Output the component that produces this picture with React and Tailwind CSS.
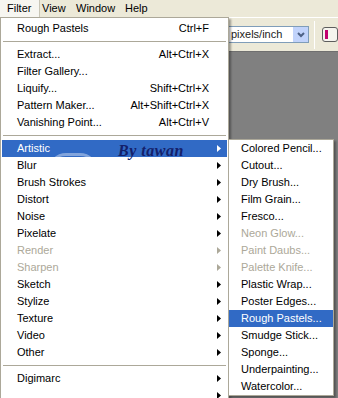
import React from 'react';

const font = { fontFamily: '"Liberation Sans", Arial, sans-serif' };

const mainItems = [
  { label: 'Rough Pastels', shortcut: 'Ctrl+F' },
  'sep',
  { label: 'Extract...', shortcut: 'Alt+Ctrl+X' },
  { label: 'Filter Gallery...' },
  { label: 'Liquify...', shortcut: 'Shift+Ctrl+X' },
  { label: 'Pattern Maker...', shortcut: 'Alt+Shift+Ctrl+X' },
  { label: 'Vanishing Point...', shortcut: 'Alt+Ctrl+V' },
  'sep',
  { label: 'Artistic', sub: true, active: true },
  { label: 'Blur', sub: true },
  { label: 'Brush Strokes', sub: true },
  { label: 'Distort', sub: true },
  { label: 'Noise', sub: true },
  { label: 'Pixelate', sub: true },
  { label: 'Render', sub: true, disabled: true },
  { label: 'Sharpen', sub: true, disabled: true },
  { label: 'Sketch', sub: true },
  { label: 'Stylize', sub: true },
  { label: 'Texture', sub: true },
  { label: 'Video', sub: true },
  { label: 'Other', sub: true },
  'sep',
  { label: 'Digimarc', sub: true },
  { label: '', sub: true },
];

const subItems = [
  { label: 'Colored Pencil...' },
  { label: 'Cutout...' },
  { label: 'Dry Brush...' },
  { label: 'Film Grain...' },
  { label: 'Fresco...' },
  { label: 'Neon Glow...', disabled: true },
  { label: 'Paint Daubs...', disabled: true },
  { label: 'Palette Knife...', disabled: true },
  { label: 'Plastic Wrap...' },
  { label: 'Poster Edges...' },
  { label: 'Rough Pastels...', active: true },
  { label: 'Smudge Stick...' },
  { label: 'Sponge...' },
  { label: 'Underpainting...' },
  { label: 'Watercolor...' },
];

const Arrow = ({ color }) => (
  <svg width="4" height="7" viewBox="0 0 4 7" className="shrink-0">
    <path d="M0 0 L4 3.5 L0 7 Z" fill={color} />
  </svg>
);

const MainRow = ({ item }) => {
  if (item === 'sep') {
    return (
      <div className="h-[9px] flex items-center px-[2px]">
        <div className="h-px w-full bg-[#aca899]" />
      </div>
    );
  }
  const color = item.active ? 'text-white' : item.disabled ? 'text-[#aca899]' : 'text-black';
  return (
    <div className={`h-[17px] flex items-center pl-[15px] pr-[6px] mx-[1px] ${item.active ? 'bg-[#316ac5]' : ''} ${color}`}>
      <span className="flex-1 whitespace-nowrap">{item.label}</span>
      {item.shortcut && <span className="whitespace-nowrap pr-[12px]">{item.shortcut}</span>}
      {item.sub && <Arrow color={item.active ? '#ffffff' : item.disabled ? '#aca899' : '#000000'} />}
    </div>
  );
};

export default function App() {
  return (
    <div className="relative w-[338px] h-[398px] overflow-hidden bg-[#808080] text-[11px] flex flex-col" style={font}>
      {/* menu bar */}
      <div className="h-[17px] bg-[#ece9d8] flex items-center text-black">
        <div className="h-[17px] w-[40px] bg-[#f7f6f1] border-r border-[#c8c5b6] flex items-center pl-[7px]">Filter</div>
        <span className="ml-[2px] w-[34px]">View</span>
        <span className="w-[49px]">Window</span>
        <span>Help</span>
      </div>

      {/* options toolbar */}
      <div className="h-[35px] bg-[#ece9d8] border-t border-white border-b border-b-[#6f6f6f] flex items-center pl-[150px]">
        <div className="w-[163px] h-[17px] bg-white border border-[#7f9db9] flex items-center justify-end">
          <span className="flex-1 pl-[80px] text-[#222]">pixels/inch</span>
          <div className="w-[15px] h-[15px] bg-[#c1d3fb] flex items-center justify-center">
            <svg width="8" height="6" viewBox="0 0 8 6">
              <path d="M1 1 L4 4 L7 1" stroke="#4d6185" strokeWidth="2" fill="none" />
            </svg>
          </div>
        </div>
        <div className="ml-[5px] w-px h-[28px] bg-[#aca899] border-r border-white" />
        <div className="ml-[7px] w-[16px] h-[15px] rounded-[3px] border border-[#5d5d5d] bg-[#f5f4ee] flex items-center pl-[2px]">
          <div className="w-[3px] h-[9px] bg-[#c2006e]" />
        </div>
      </div>

      <div className="flex-1" />

      {/* filter dropdown */}
      <div className="absolute left-0 top-[17px] w-[229px] bg-white border border-[#aca899] pt-[2px] shadow-[2px_2px_2px_rgba(0,0,0,0.35)]">
        {mainItems.map((item, i) => (
          <MainRow key={i} item={item} />
        ))}
      </div>

      {/* faint watermark circle */}
      <div className="absolute left-[48px] top-[153px] w-[50px] h-[36px] rounded-full border-t-[3px] border-white/40" />

      {/* watermark text */}
      <div
        className="absolute left-[118px] top-[139px] text-[16px] font-bold italic text-[#14206a] tracking-[0.5px]"
        style={{ fontFamily: '"Liberation Serif", "Times New Roman", serif' }}
      >
        By tawan
      </div>

      {/* artistic submenu */}
      <div className="absolute left-[228px] top-[139px] w-[106px] bg-white border border-[#aca899] shadow-[2px_2px_2px_rgba(0,0,0,0.35)]">
        {subItems.map((item, i) => (
          <div
            key={i}
            className={`h-[17px] flex items-center pl-[12px] ${item.active ? 'bg-[#316ac5] text-white' : item.disabled ? 'text-[#aca899]' : 'text-black'}`}
          >
            <span className="whitespace-nowrap">{item.label}</span>
          </div>
        ))}
      </div>
    </div>
  );
}
